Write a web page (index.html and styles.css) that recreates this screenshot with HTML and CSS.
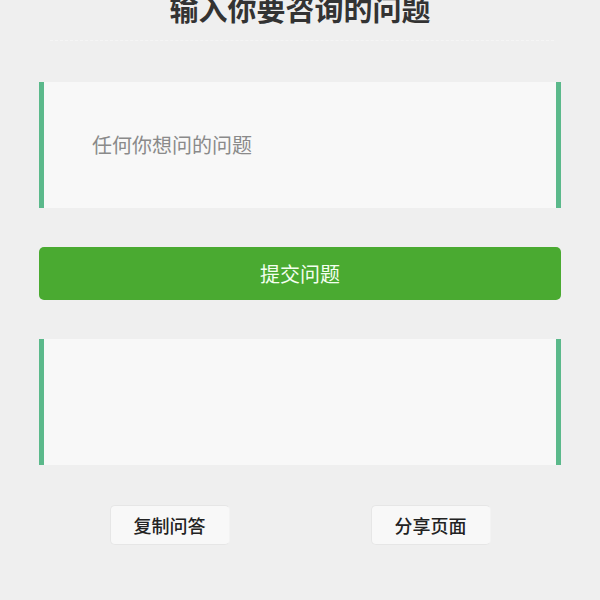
FILE: index.html
```html
<!DOCTYPE html>
<html lang="zh">
<head>
<meta charset="utf-8">
<title>输入你要咨询的问题</title>
<link rel="stylesheet" href="styles.css">
</head>
<body>
<main class="page">
  <h1 class="title">输入你要咨询的问题</h1>
  <div class="divider"></div>
  <textarea class="box question" placeholder="任何你想问的问题"></textarea>
  <button class="submit" type="button">提交问题</button>
  <div class="box answer"></div>
  <div class="actions">
    <button class="action" type="button">复制问答</button>
    <button class="action" type="button">分享页面</button>
  </div>
</main>
</body>
</html>
```
FILE: styles.css
```css
html, body {
  margin: 0;
  padding: 0;
  background: #efefef;
}
body {
  font-family: "Noto Sans CJK SC", "Noto Sans", sans-serif;
  overflow: hidden;
}
.page {
  display: flex;
  flex-direction: column;
  padding: 0 39px;
}
.title {
  margin: -9px 0 0;
  font-size: 29px;
  line-height: 35px;
  font-weight: 700;
  color: #333;
  text-align: center;
}
.divider {
  margin: 14px 7px 0 11px;
  border-top: 1px dashed #f5f5f5;
  height: 0;
}
.box {
  box-sizing: border-box;
  display: block;
  width: 100%;
  height: 126px;
  margin: 0;
  background: #f8f8f8;
  border: none;
  border-left: 5px solid #5bb98b;
  border-right: 5px solid #5bb98b;
  resize: none;
  outline: none;
  font-family: inherit;
}
.question {
  margin-top: 41px;
  padding: 50px 48px;
  font-size: 20px;
  line-height: 26px;
  color: #444;
}
.question::placeholder {
  color: #8a8a8a;
}
.submit {
  margin-top: 39px;
  height: 53px;
  border: none;
  border-radius: 5px;
  background: #4aaa31;
  color: #f4fff0;
  font-family: inherit;
  font-size: 20px;
  padding: 0;
}
.answer {
  margin-top: 39px;
}
.actions {
  display: flex;
  justify-content: space-around;
  margin-top: 40px;
}
.action {
  width: 120px;
  height: 40px;
  box-sizing: border-box;
  background: #f8f8f8;
  border: 1px solid #e6e6e6;
  border-right-color: #f3f3f3;
  border-radius: 5px;
  font-family: inherit;
  font-size: 18px;
  font-weight: 500;
  color: #222;
  padding: 0;
}
```
